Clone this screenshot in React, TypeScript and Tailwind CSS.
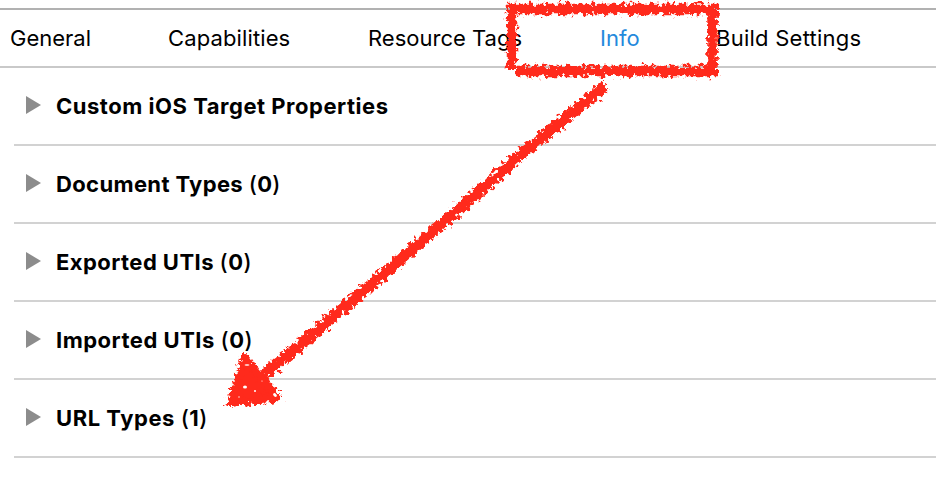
const tabs = [
  { label: 'General', active: false, cls: 'w-[158px]' },
  { label: 'Capabilities', active: false, cls: 'w-[200px] tracking-[0.12px]' },
  { label: 'Resource Tags', active: false, cls: 'w-[232px]' },
  { label: 'Info', active: true, cls: 'w-[116px]' },
  { label: 'Build Settings', active: false, cls: 'tracking-[0.25px]' },
];

const sections = [
  { title: 'Custom iOS Target Properties', cls: 'tracking-[0.52px]' },
  { title: 'Document Types', count: 0, cls: 'tracking-[0.36px]' },
  { title: 'Exported UTIs', count: 0, cls: 'tracking-[0.44px]' },
  { title: 'Imported UTIs', count: 0, cls: 'tracking-[0.5px]' },
  { title: 'URL Types', count: 1, cls: 'tracking-[0.54px]' },
];

function Annotation() {
  return (
    <svg className="pointer-events-none absolute inset-0" width="936" height="490" viewBox="0 0 936 490" fill="none">
      <defs>
        <filter id="crayon" filterUnits="userSpaceOnUse" x="0" y="0" width="936" height="490" colorInterpolationFilters="sRGB">
          <feTurbulence type="fractalNoise" baseFrequency="0.24" numOctaves="3" seed="7" result="noise" />
          <feDisplacementMap in="SourceGraphic" in2="noise" scale="12" xChannelSelector="R" yChannelSelector="G" />
        </filter>
      </defs>
      <g filter="url(#crayon)" stroke="#ff2a1c" strokeWidth="10.500">
        <path d="M507 9H718" />
        <path d="M511.500 4V69" strokeWidth="9.500" />
        <path d="M515 71H718" />
        <path d="M712.500 5V75" />
        <path d="M605 86L530 147L413 249L262 377" strokeWidth="11" />
        <path d="M245 358L278 398L230 403Z" fill="#ff2a1c" strokeWidth="8" strokeLinejoin="round" />
      </g>
      <g fill="#fff">
        <ellipse cx="245" cy="387" rx="2" ry="1.500" />
        <ellipse cx="275" cy="395" rx="2.200" ry="1.500" transform="rotate(45 275 395)" />
        <ellipse cx="247" cy="365" rx="2.500" ry="0.800" />
        <circle cx="255" cy="391" r="1" />
        <circle cx="239" cy="397" r="0.700" />
        <circle cx="262" cy="381" r="0.600" />
      </g>
    </svg>
  );
}

export default function App() {
  return (
    <div className="relative h-[490px] w-[936px] overflow-hidden bg-white pt-2 font-['Inter',sans-serif] text-[22px] text-black">
      <nav className="flex h-[60px] items-center border-y-2 border-t-[#b1b1b1] border-b-[#c9c9c9] pl-[10px]">
        {tabs.map((t) => (
          <button key={t.label} className={`shrink-0 text-left leading-7 whitespace-nowrap ${t.cls} ${t.active ? 'text-[#2489dc]' : ''}`}>
            {t.label}
          </button>
        ))}
      </nav>
      <main className="pl-[14px]">
        {sections.map((s) => (
          <div key={s.title} className="flex h-[78px] items-center border-b-2 border-[#d2d2d2] pl-3">
            <svg className="mr-[15px] -mt-[2px] shrink-0" width="15" height="18" viewBox="0 0 15 18">
              <path d="M0 0L15 9L0 18Z" fill="#8c8c8c" />
            </svg>
            <span className={`leading-7 font-bold whitespace-nowrap ${s.cls}`}>
              {s.title}
              {s.count !== undefined && (
                <>
                  {' '}
                  <span className="font-medium">(</span>
                  {s.count}
                  <span className="font-medium">)</span>
                </>
              )}
            </span>
          </div>
        ))}
      </main>
      <Annotation />
    </div>
  );
}
